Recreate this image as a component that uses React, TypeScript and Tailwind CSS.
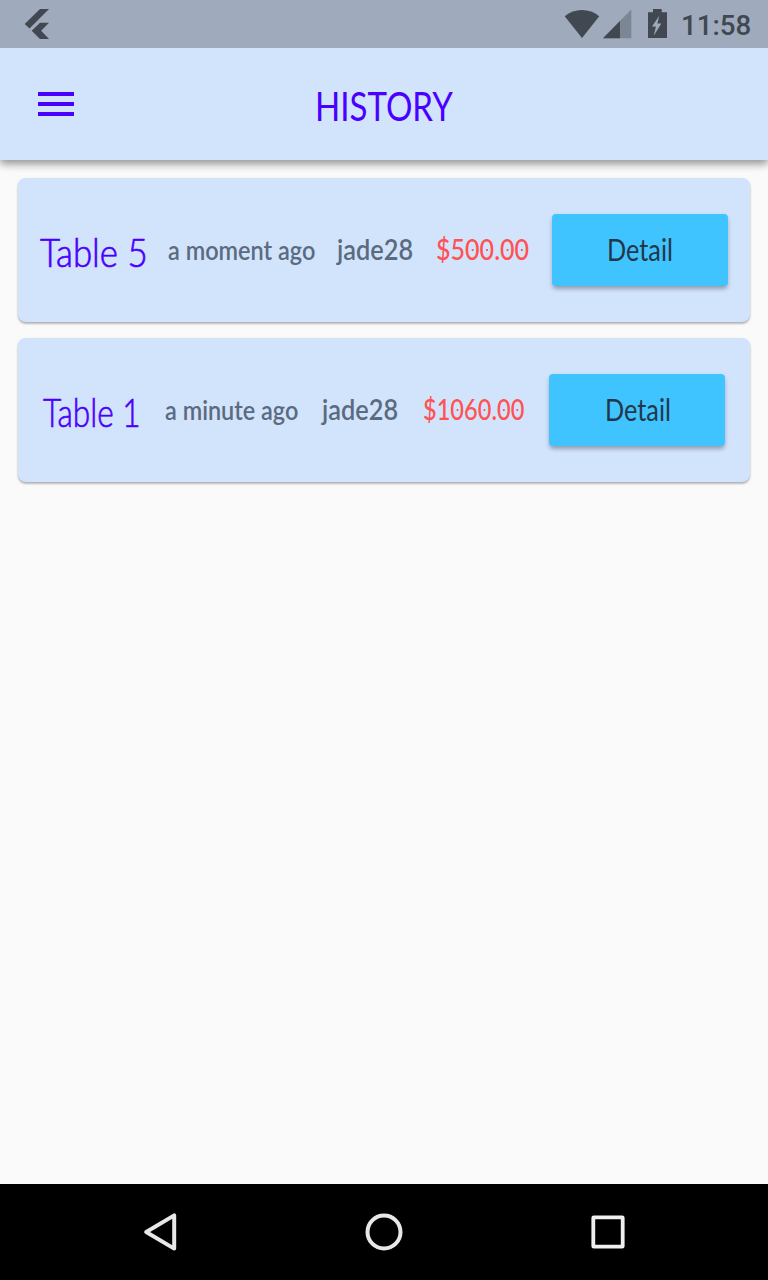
import { useLayoutEffect, useRef } from "react";
import type { ReactNode } from "react";

/** Condenses a line of text so that it fills the width of its slot. */
function FitText({ className, children }: { className: string; children: ReactNode }) {
  const ref = useRef<HTMLSpanElement>(null);
  useLayoutEffect(() => {
    const el = ref.current;
    if (!el || !el.parentElement) return;
    el.style.transform = `scaleX(${el.parentElement.clientWidth / el.offsetWidth})`;
  }, []);
  return (
    <div className={`flex shrink-0 items-start whitespace-nowrap ${className}`}>
      <span ref={ref} className="inline-block shrink-0 origin-left">
        {children}
      </span>
    </div>
  );
}

function Price({ value }: { value: string }) {
  return (
    <>
      {value.split("").map((c, i) =>
        c === "0" ? (
          <span
            key={i}
            className="relative after:absolute after:top-[17px] after:left-1/2 after:-ml-[1px] after:h-[2px] after:w-[2px] after:bg-[#ff5252]"
          >
            0
          </span>
        ) : (
          c
        )
      )}
    </>
  );
}

type Order = {
  table: string;
  tableW: string;
  time: string;
  timeW: string;
  price: string;
  priceW: string;
};

const orders: Order[] = [
  {
    table: "Table 5",
    tableW: "w-[107.5px] -mr-[2px]",
    time: "a moment ago",
    timeW: "w-[147px]",
    price: "$500.00",
    priceW: "mr-px ml-px w-[92.5px]",
  },
  {
    table: "Table 1",
    tableW: "ml-[0.5px] w-[98px]",
    time: "a minute ago",
    timeW: "w-[132.5px]",
    price: "$1060.00",
    priceW: "mr-[0.5px] w-[101px]",
  },
];

function OrderCard({ order }: { order: Order }) {
  return (
    <li className="flex h-36 items-center justify-evenly rounded-lg bg-[#d2e3fc] shadow-[0_2px_2px_rgba(0,0,0,0.2),0_1px_3px_rgba(0,0,0,0.14)]">
      <FitText
        className={`pt-1 text-[40px] leading-[48px] font-light text-[#4a00ff] [-webkit-text-stroke:0.7px_#4a00ff] ${order.tableW}`}
      >
        {order.table}
      </FitText>
      <FitText className={`text-[27px] leading-8 font-semibold text-[#5a6b80] ${order.timeW}`}>{order.time}</FitText>
      <FitText className="w-[76px] pb-0.5 text-[28px] leading-8 font-semibold text-[#5a6b80]">jade28</FitText>
      <FitText className={`pb-0.5 text-[28px] leading-8 font-medium text-[#ff5252] ${order.priceW}`}>
        <Price value={order.price} />
      </FitText>
      <button className="flex h-18 w-44 shrink-0 items-center justify-center rounded bg-[#40c4ff] shadow-[0_4px_4px_-1px_rgba(0,0,0,0.22),0_2px_5px_rgba(0,0,0,0.12)]">
        <FitText className="ml-px w-[66px] pb-0.5 text-[31px] leading-10 text-[#22384a]">Detail</FitText>
      </button>
    </li>
  );
}

export default function App() {
  return (
    <div className="flex h-[1280px] w-[768px] flex-col overflow-hidden bg-[#fafafa] font-['Lato',sans-serif]">
      <div className="relative z-20 flex h-12 shrink-0 items-center justify-between bg-[#9fabbc] pr-[17px] pl-6 text-[#414852]">
        <svg className="h-12 w-7" viewBox="24 0 28 48" fill="currentColor">
          <path d="M40 9h9L29.5 28.5 24.7 24zM40 22.7h9l-7.8 8 7.8 8.3h-9l-8.3-8.3z" />
        </svg>
        <div className="flex items-center">
          <svg className="h-12 w-[117px]" viewBox="564 0 117 48" fill="currentColor">
            <path d="M564.7 16.3C574.5 8 589.5 8 599.3 16.3L582 38z" />
            <path d="M631.3 9.6V38.2H603z" fill="#7b8795" />
            <path d="M620 21v17.2h-17z" />
            <path d="M648 12.3h5V9h8.700v3.300h5.300V38h-19z" />
            <path d="M659.3 15.7l-7.300 10.800h3.900l-2.100 9.200 7.500-12.200h-4z" fill="#9fabbc" />
          </svg>
          <FitText className="w-[70px] pt-[3px] font-['Roboto',sans-serif] text-[28.5px] leading-8 font-medium">
            11:58
          </FitText>
        </div>
      </div>

      <header className="relative z-10 grid h-28 shrink-0 grid-cols-[1fr_auto_1fr] items-center bg-[#d2e3fc] shadow-[0_4px_8px_rgba(0,0,0,0.3),0_2px_10px_rgba(0,0,0,0.18)]">
        <svg className="ml-8 size-12" viewBox="0 0 24 24" fill="#4a00ff">
          <path d="M3 18h18v-2H3v2zm0-5h18v-2H3v2zm0-7v2h18V6H3z" />
        </svg>
        <h1 className="pt-1">
          <FitText className="w-[138px] text-[40px] leading-[48px] font-normal text-[#4a00ff]">HISTORY</FitText>
        </h1>
      </header>

      <main className="flex-1 pt-[18px] pr-[18px] pl-[17.5px]">
        <ul className="flex flex-col gap-4">
          {orders.map((order) => (
            <OrderCard key={order.table} order={order} />
          ))}
        </ul>
      </main>

      <nav className="flex h-24 shrink-0 items-center justify-center gap-44 bg-black">
        <svg className="size-12" viewBox="0 0 48 48" fill="none" stroke="#e8e8e8" strokeWidth="4" strokeLinejoin="round">
          <path d="M38.2 7.4V40.6L10.2 24z" />
        </svg>
        <svg className="size-12" viewBox="0 0 48 48" fill="none" stroke="#e8e8e8" strokeWidth="4">
          <circle cx="24" cy="24" r="16.5" />
        </svg>
        <svg className="size-12" viewBox="0 0 48 48" fill="none" stroke="#f0f0f0" strokeWidth="3.8" strokeLinejoin="round">
          <rect x="9.3" y="9.3" width="29.4" height="29.4" rx="0.5" />
        </svg>
      </nav>
    </div>
  );
}
